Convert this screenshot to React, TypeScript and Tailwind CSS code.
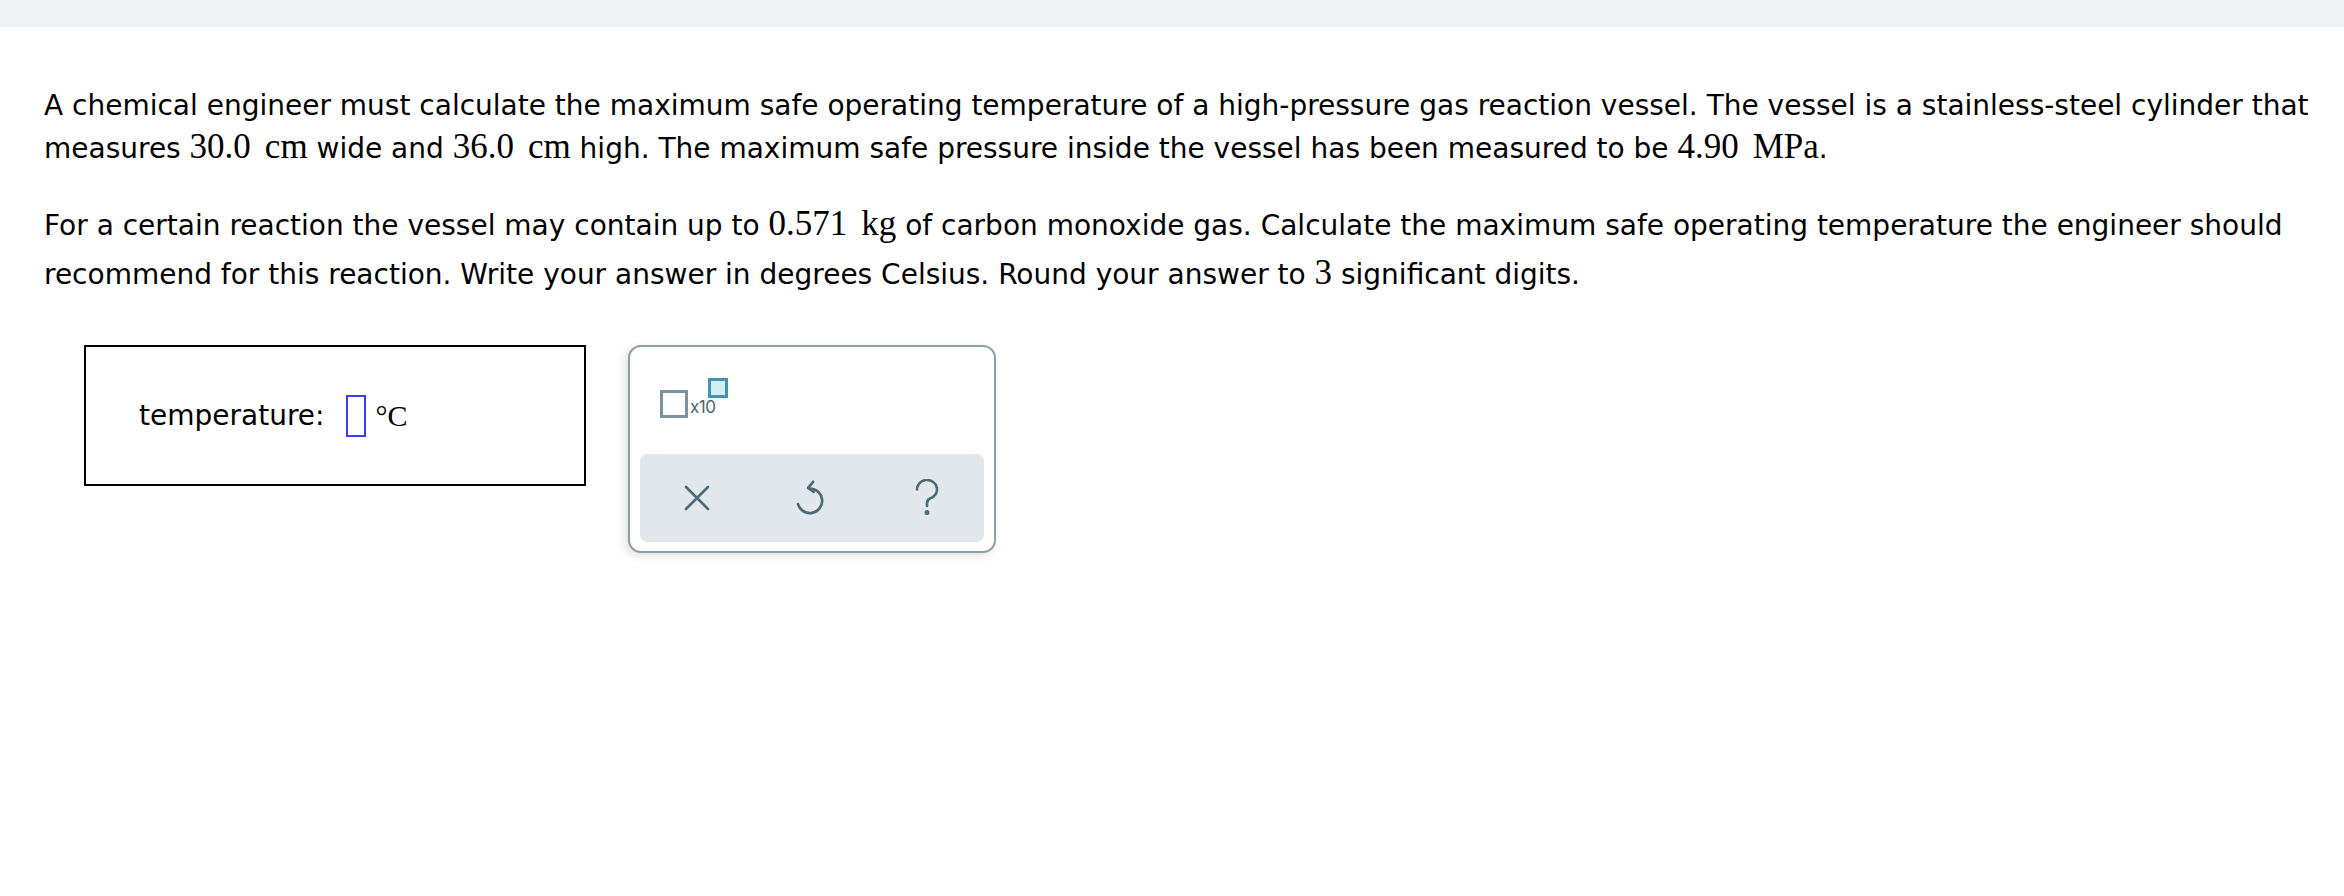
function M({ children }: { children: React.ReactNode }) {
  return (
    <span className="font-['Liberation_Serif',serif] text-[35px] leading-none">{children}</span>
  );
}

function Unit({ value, unit }: { value: string; unit: string }) {
  return (
    <>
      <M>{value}</M>
      <M>
        <span className="ml-[14px]">{unit}</span>
      </M>
    </>
  );
}

function CloseIcon() {
  return (
    <svg width="26" height="26" viewBox="0 0 26 26" fill="none" stroke="#4c6a77" strokeWidth="2.6" strokeLinecap="round">
      <path d="M2 2 L24 24 M24 2 L2 24" />
    </svg>
  );
}

function UndoIcon() {
  return (
    <svg width="34" height="38" viewBox="0 0 30 34" fill="none" stroke="#4c6a77" strokeWidth="2.4" strokeLinecap="round" strokeLinejoin="round">
      <path d="M13 8.5a11 11 0 1 1 -10.5 14" />
      <path d="M16 2.5 L11.5 8 L16.5 11.5" />
    </svg>
  );
}

function HelpIcon() {
  return (
    <svg width="26" height="38" viewBox="0 0 26 38" fill="none" stroke="#4c6a77" strokeWidth="2.6" strokeLinecap="round">
      <path d="M3 10.5a10 9.5 0 1 1 13 9c-2.4 1-3 2.6-3 5v2.5" />
      <circle cx="13" cy="33.5" r="1.2" fill="#4c6a77" />
    </svg>
  );
}

export default function App() {
  return (
    <div className="min-h-[896px] bg-white text-black">
      <div className="h-[27px] bg-[#f0f1f3]" />
      <div className="pl-[44px] pt-[59px] font-['DejaVu_Sans',sans-serif] text-[28px]">
        <div className="leading-[39px]">
          <div className="whitespace-nowrap">
            A chemical engineer must calculate the maximum safe operating temperature of a high-pressure gas reaction vessel. The vessel is a stainless-steel cylinder that
          </div>
          <div className="mt-[4px] whitespace-nowrap">
            measures <Unit value="30.0" unit="cm" /> wide and <Unit value="36.0" unit="cm" /> high. The maximum safe pressure inside the vessel has been measured to be{" "}
            <Unit value="4.90" unit="MPa" />.
          </div>
        </div>
        <div className="mt-[33px] leading-[49px]">
          <div className="whitespace-nowrap">
            For a certain reaction the vessel may contain up to <Unit value="0.571" unit="kg" /> of carbon monoxide gas. Calculate the maximum safe operating temperature the engineer should
          </div>
          <div className="whitespace-nowrap">
            recommend for this reaction. Write your answer in degrees Celsius. Round your answer to <M>3</M> significant digits.
          </div>
        </div>

        <div className="mt-[46px] flex items-start">
          <div className="ml-[40px] flex h-[141px] w-[502px] items-center border-2 border-black pl-[53px]">
            <span>temperature:</span>
            <span className="ml-[22px] inline-block h-[42px] w-[20px] border-2 border-[#3b3bff]" />
            <span className="ml-[9px] font-['Liberation_Serif',serif] text-[30px]">°C</span>
          </div>

          <div className="ml-[42px] flex h-[208px] w-[368px] flex-col rounded-[13px] border-2 border-[#8a9fa8] bg-white px-[10px] pb-[9px] shadow-[-3px_3px_8px_rgba(0,0,0,0.12)]">
            <div className="relative h-[107px]">
              <div className="absolute left-[20px] top-[43px] h-[28px] w-[28px] border-[3px] border-[#7a939c]" />
              <span className="absolute left-[50px] top-[52px] font-['Inter',sans-serif] text-[17px] leading-none tracking-[-0.5px] text-[#4a6470]">
                x10
              </span>
              <div className="absolute left-[68px] top-[31px] h-[20px] w-[20px] border-[3px] border-[#3d97b3] bg-[#d5eef5]" />
            </div>
            <div className="grid h-[88px] grid-cols-3 items-center rounded-[7px] bg-[#e1e7ea]">
              <div className="flex justify-center">
                <CloseIcon />
              </div>
              <div className="flex justify-center">
                <UndoIcon />
              </div>
              <div className="flex justify-center">
                <HelpIcon />
              </div>
            </div>
          </div>
        </div>
      </div>
    </div>
  );
}
